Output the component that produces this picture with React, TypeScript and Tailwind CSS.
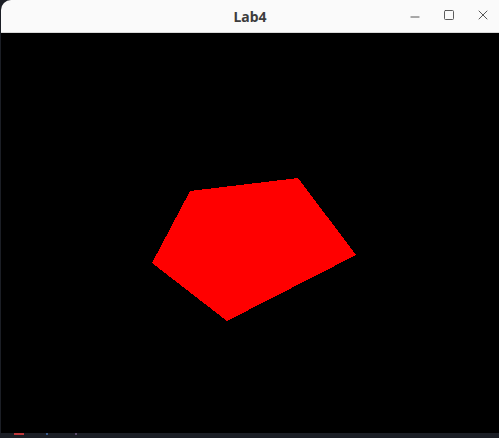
import { Minus, Square, X } from "lucide-react";

export default function App() {
  return (
    <div className="w-[499px] h-[438px] bg-[#1b1e25] flex flex-col overflow-hidden">
      <div className="h-[33px] ml-[1px] bg-[#fafafa] rounded-tl-[10px] border-b border-[#d8d8d8] relative flex items-center justify-center shrink-0">
        <span
          className="text-[14px] font-bold text-[#3d3d3d]"
          style={{ fontFamily: '"Noto Sans", "Liberation Sans", sans-serif' }}
        >
          Lab4
        </span>
        <div className="absolute right-0 inset-y-0 flex items-center gap-[2px] text-[#4a4a4a]">
          <div className="w-[32px] flex justify-center mt-[2px]">
            <Minus size={14} strokeWidth={1.6} />
          </div>
          <div className="w-[32px] flex justify-center -mt-[3px]">
            <Square size={12} strokeWidth={1.8} />
          </div>
          <div className="w-[32px] flex justify-center -mt-[3px]">
            <X size={16} strokeWidth={1.4} />
          </div>
        </div>
      </div>
      <div className="ml-[1px] h-[400px] bg-black shrink-0">
        <svg width="498" height="400" viewBox="1 33 498 400" shapeRendering="crispEdges">
          <polygon points="190,191 298,178 356,255 227,321 152,263" fill="#ff0000" />
        </svg>
      </div>
      <div className="flex-1 flex items-start">
        <div className="ml-[14px] w-[10px] h-[2px] bg-[#c0393b]" />
        <div className="ml-[22px] w-[2px] h-[2px] bg-[#3a5a8a]" />
        <div className="ml-[27px] w-[2px] h-[2px] bg-[#5a4a6a]" />
      </div>
    </div>
  );
}
